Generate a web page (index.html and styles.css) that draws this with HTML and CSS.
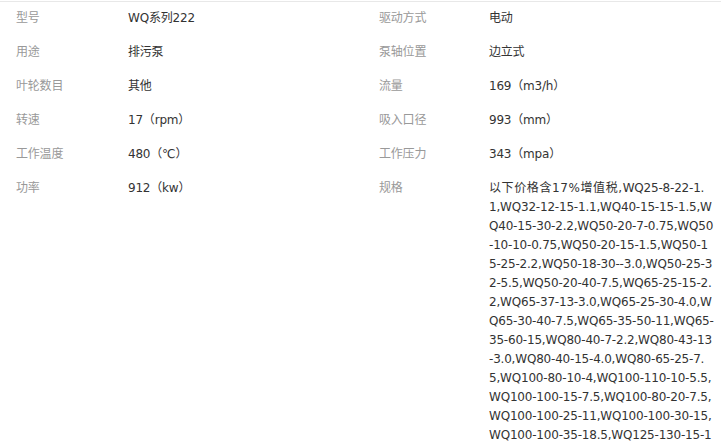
FILE: index.html
```html
<!DOCTYPE html>
<html lang="zh-CN">
<head>
<meta charset="utf-8">
<title>参数</title>
<link rel="stylesheet" href="styles.css">
</head>
<body>
<dl class="params">
  <dt class="label">型号</dt><dd class="value">WQ系列222</dd>
  <dt class="label">驱动方式</dt><dd class="value">电动</dd>

  <dt class="label">用途</dt><dd class="value">排污泵</dd>
  <dt class="label">泵轴位置</dt><dd class="value">边立式</dd>

  <dt class="label">叶轮数目</dt><dd class="value">其他</dd>
  <dt class="label">流量</dt><dd class="value">169（m3/h）</dd>

  <dt class="label">转速</dt><dd class="value">17（rpm）</dd>
  <dt class="label">吸入口径</dt><dd class="value">993（mm）</dd>

  <dt class="label">工作温度</dt><dd class="value">480（℃）</dd>
  <dt class="label">工作压力</dt><dd class="value">343（mpa）</dd>

  <dt class="label">功率</dt><dd class="value">912（kw）</dd>
  <dt class="label">规格</dt><dd class="value spec"><span class="note">以下价格含17%增值税,</span>WQ25-8-22-1.1,WQ32-12-15-1.1,WQ40-15-15-1.5,WQ40-15-30-2.2,WQ50-20-7-0.75,WQ50-10-10-0.75,WQ50-20-15-1.5,WQ50-15-25-2.2,WQ50-18-30--3.0,WQ50-25-32-5.5,WQ50-20-40-7.5,WQ65-25-15-2.2,WQ65-37-13-3.0,WQ65-25-30-4.0,WQ65-30-40-7.5,WQ65-35-50-11,WQ65-35-60-15,WQ80-40-7-2.2,WQ80-43-13-3.0,WQ80-40-15-4.0,WQ80-65-25-7.5,WQ100-80-10-4,WQ100-110-10-5.5,WQ100-100-15-7.5,WQ100-80-20-7.5,WQ100-100-25-11,WQ100-100-30-15,WQ100-100-35-18.5,WQ125-130-15-15,WQ125-130-20-18.5,WQ125-130-25-22</dd>
</dl>
</body>
</html>
```

FILE: styles.css
```css
html, body {
  margin: 0;
  padding: 0;
  background: #ffffff;
}

body {
  font-family: "DejaVu Sans", "Noto Sans CJK SC", sans-serif;
  font-size: 12px;
  letter-spacing: -0.2px;
  color: #333333;
}

.params {
  margin: 1px 0 0 0;
  padding: 0 6px 0 16px;
  border-top: 1px solid #e8e8e8;
  display: grid;
  grid-template-columns: 112px 251px 110px 1fr;
  align-items: start;
}

.label,
.value {
  margin: 0;
  padding: 7px 0 8px 0;
  line-height: 19px;
}

.label {
  color: #999999;
}

.value {
  color: #333333;
}

.spec {
  word-break: break-all;
}

.note {
  letter-spacing: 0.6px;
}
```
